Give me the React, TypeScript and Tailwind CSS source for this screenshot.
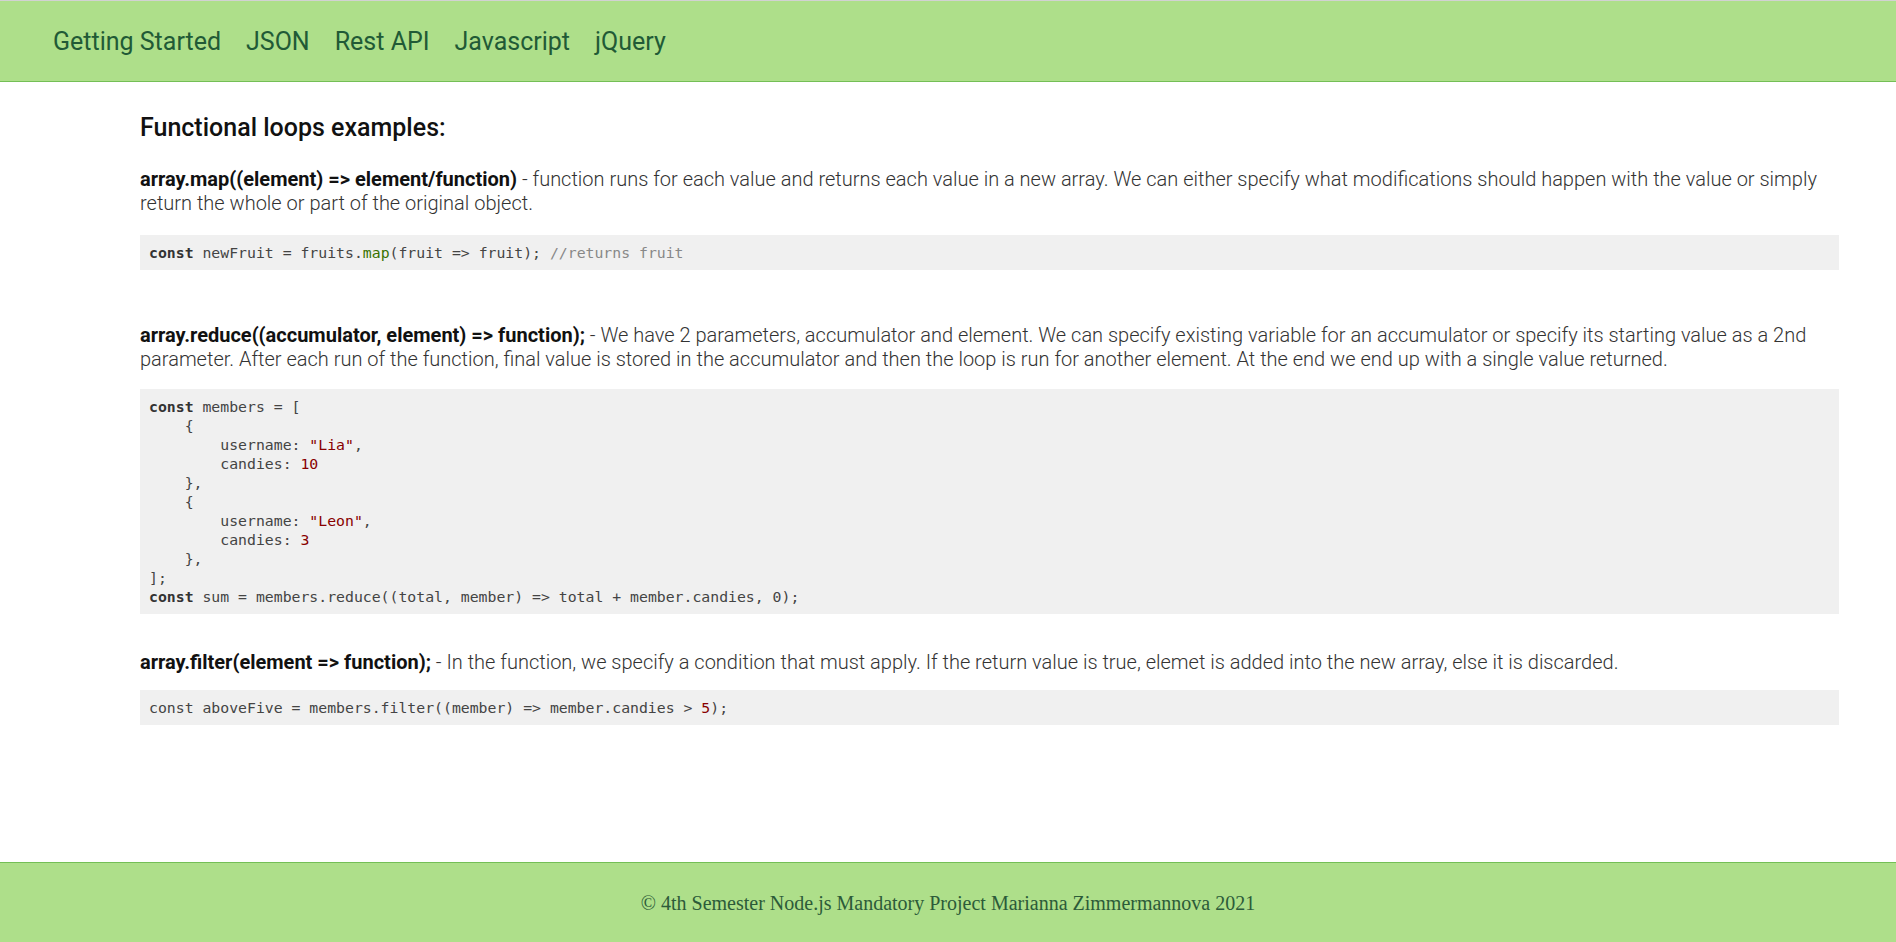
import React from "react";

const mono = { fontFamily: '"DejaVu Sans Mono", "Liberation Mono", monospace' };

function Kw({ children }: { children: React.ReactNode }) {
  return <span className="font-bold text-[#333]">{children}</span>;
}
function Str({ children }: { children: React.ReactNode }) {
  return <span className="text-[#880000]">{children}</span>;
}

export default function App() {
  const navItems = ["Getting Started", "JSON", "Rest API", "Javascript", "jQuery"];
  return (
    <div className="min-h-screen flex flex-col bg-white" style={{ fontFamily: 'Roboto, "Noto Sans", sans-serif' }}>
      <nav className="h-[82px] box-border border-t border-t-[#d2d2d2] border-b border-b-[#74bf56] bg-[#aedf8a] flex items-center pl-[53px] pt-[2px] gap-[25px]">
        {navItems.map((n) => (
          <a key={n} className="text-[25px] leading-[30px] text-[#215a36] font-normal">
            {n}
          </a>
        ))}
      </nav>

      <main className="flex-1 pl-[140px] pr-[57px]">
        <h3 className="mt-[31px] text-[25px] leading-[30px] font-medium text-[#111]">Functional loops examples:</h3>

        <p className="mt-[24px] text-[20px] leading-[24px] font-light text-[#333]">
          <b className="font-bold text-[#111]">array.map((element) =&gt; element/function)</b> - function runs for each value and returns each value in a new array. We can either specify what modifications should happen with the value or simply return the whole or part of the original object.
        </p>
        <pre className="mt-[20px] bg-[#f0f0f0] text-[#444] text-[14.8px] leading-[19px] px-[9px] py-[8px]" style={mono}>
          <Kw>const</Kw> newFruit = fruits.<span className="text-[#397300]">map</span>(fruit =&gt; fruit); <span className="text-[#888888]">//returns fruit</span>
        </pre>

        <p className="mt-[53px] text-[20px] leading-[24px] font-light text-[#333]">
          <b className="font-bold text-[#111]">array.reduce((accumulator, element) =&gt; function);</b> - We have 2 parameters, accumulator and element. We can specify existing variable for an accumulator or specify its starting value as a 2nd parameter. After each run of the function, final value is stored in the accumulator and then the loop is run for another element. At the end we end up with a single value returned.
        </p>
        <pre className="mt-[18px] bg-[#f0f0f0] text-[#444] text-[14.8px] leading-[19px] px-[9px] py-[8px]" style={mono}>
          <Kw>const</Kw> members = [{"\n"}
          {"    {\n"}
          {"        username: "}<Str>"Lia"</Str>{",\n"}
          {"        candies: "}<Str>10</Str>{"\n"}
          {"    },\n"}
          {"    {\n"}
          {"        username: "}<Str>"Leon"</Str>{",\n"}
          {"        candies: "}<Str>3</Str>{"\n"}
          {"    },\n"}
          {"];\n"}
          <Kw>const</Kw> sum = members.reduce((total, member) =&gt; total + member.candies, 0);
        </pre>

        <p className="mt-[36px] text-[20px] leading-[24px] font-light text-[#333]">
          <b className="font-bold text-[#111]">array.filter(element =&gt; function);</b> - In the function, we specify a condition that must apply. If the return value is true, elemet is added into the new array, else it is discarded.
        </p>
        <pre className="mt-[16px] bg-[#f0f0f0] text-[#444] text-[14.8px] leading-[19px] px-[9px] py-[8px]" style={mono}>
          const aboveFive = members.filter((member) =&gt; member.candies &gt; <Str>5</Str>);
        </pre>
      </main>

      <footer className="h-[80px] box-border border-t border-t-[#74bf56] bg-[#aedf8a] flex items-center justify-center">
        <span className="text-[20px] text-[#2c5b39]" style={{ fontFamily: '"Liberation Serif", "Times New Roman", serif' }}>
          © 4th Semester Node.js Mandatory Project Marianna Zimmermannova 2021
        </span>
      </footer>
    </div>
  );
}
